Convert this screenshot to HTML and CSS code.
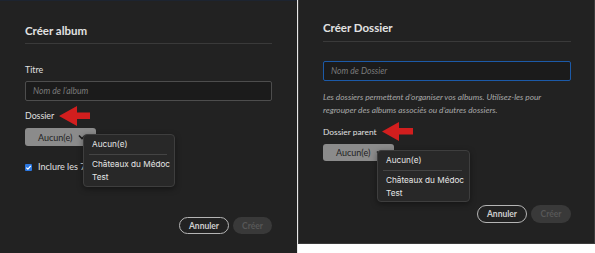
FILE: index.html
```html
<!DOCTYPE html>
<html lang="fr">
  <head>
    <meta charset="UTF-8" />
    <meta name="viewport" content="width=device-width, initial-scale=1.0" />
    <title>Créer album / Créer Dossier</title>
    <link rel="stylesheet" href="styles.css">
  </head>
  <body>
    <div class="screens">
      <div class="dialog album">
        <h2 class="heading">Créer album</h2>
        <label class="field_label" for="album_name">Titre</label>
        <input class="text_input" type="text" id="album_name" placeholder="Nom de l’album" />
        <div class="field_label with_arrow">
          Dossier
          <svg class="arrow" width="32" height="20" viewBox="0 0 32 20">
            <polygon points="0,10 18,0 18,6.5 31,6.5 31,13 18,13 18,20" fill="#d21e1e" />
          </svg>
        </div>
        <div class="select_wrap">
          <button class="select_btn">
            Aucun(e)
            <svg width="8" height="6" viewBox="0 0 8 6">
              <polyline points="1,1.5 4,4.5 7,1.5" fill="none" stroke="#1e1e1e" stroke-width="1.6" />
            </svg>
          </button>
          <div class="menu">
            <div class="menu_item">Aucun(e)</div>
            <div class="menu_sep"></div>
            <div class="menu_item">Châteaux du Médoc</div>
            <div class="menu_item">Test</div>
          </div>
        </div>
        <div class="check_row">
          <span class="check">
            <svg width="7" height="7" viewBox="0 0 7 7">
              <polyline points="1.3,3.6 2.9,5.2 5.8,1.8" fill="none" stroke="#fff" stroke-width="1.2" />
            </svg>
          </span>
          <span class="check_text">Inclure les 7</span>
        </div>
        <div class="actions">
          <button class="btn_outline">Annuler</button>
          <button class="btn_disabled">Créer</button>
        </div>
      </div>

      <div class="divider_line"></div>

      <div class="dialog folder">
        <h2 class="heading">Créer Dossier</h2>
        <input class="text_input focused" type="text" placeholder="Nom de Dossier" />
        <p class="help">
          Les dossiers permettent d’organiser vos albums. Utilisez-les pour<br />
          regrouper des albums associés ou d’autres dossiers.
        </p>
        <div class="field_label with_arrow">
          Dossier parent
          <svg class="arrow" width="32" height="19" viewBox="0 0 32 19">
            <polygon points="0,9.5 17,0 17,6 31,6 31,12.5 17,12.5 17,19" fill="#d21e1e" />
          </svg>
        </div>
        <div class="select_wrap">
          <button class="select_btn">
            Aucun(e)
            <svg width="8" height="6" viewBox="0 0 8 6">
              <polyline points="1,1.5 4,4.5 7,1.5" fill="none" stroke="#1e1e1e" stroke-width="1.6" />
            </svg>
          </button>
          <div class="menu">
            <div class="menu_item">Aucun(e)</div>
            <div class="menu_sep"></div>
            <div class="menu_item">Châteaux du Médoc</div>
            <div class="menu_item">Test</div>
          </div>
        </div>
        <div class="actions">
          <button class="btn_outline">Annuler</button>
          <button class="btn_disabled">Créer</button>
        </div>
      </div>
    </div>
  </body>
</html>
```

FILE: styles.css
```css
* {
  margin: 0;
  padding: 0;
  box-sizing: border-box;
}
body {
  background-color: #fff;
  font-family: Lato, "Open Sans", sans-serif;
  color: #ddd;
}

.screens {
  display: flex;
  align-items: flex-start;
  height: 253px;
}

.dialog {
  display: flex;
  flex-direction: column;
  align-items: flex-start;
  background-color: #222;
}

.album {
  width: 297px;
  height: 253px;
  padding: 22px 25px 0 25px;
  border-top: 1px solid #1d2430;
}

.divider_line {
  width: 1px;
  height: 253px;
  background-color: #e8e8e8;
}

.folder {
  width: 297px;
  height: 244px;
  padding: 20px 23px 0 24px;
  border: 1px solid #3b3b3b;
  border-top: none;
}

.heading {
  width: 100%;
  font-size: 11.5px;
  font-weight: 700;
  line-height: 16px;
  color: #e2e2e2;
  padding-bottom: 4px;
  border-bottom: 1px solid #3a3a3a;
}
.folder .heading {
  padding-bottom: 5px;
}

.field_label {
  font-size: 8.8px;
  line-height: 12px;
  color: #e0e0e0;
}
.album label.field_label {
  margin-top: 20px;
}

.with_arrow {
  position: relative;
}
.album .with_arrow {
  margin-top: 9px;
}
.folder .with_arrow {
  margin-top: 9px;
  font-size: 8.4px;
}
.arrow {
  position: absolute;
  left: calc(100% + 5px);
  top: -4px;
}

.text_input {
  width: 100%;
  height: 20px;
  margin-top: 5px;
  padding: 0 7px;
  background-color: #1b1b1b;
  border: 1px solid #4d4d4d;
  border-radius: 2px;
  font-family: Lato, sans-serif;
  font-size: 8.6px;
  color: #ccc;
}
.text_input::placeholder {
  color: #7a7a7a;
  font-style: italic;
}
.focused {
  margin-top: 19px;
  border: 1.5px solid #1c5aa8;
}

.help {
  margin-top: 10px;
  font-size: 8.3px;
  line-height: 13px;
  font-style: italic;
  color: #a8a8a8;
  white-space: nowrap;
}

.select_wrap {
  position: relative;
  margin-top: 6px;
}
.select_btn {
  display: flex;
  align-items: center;
  gap: 6px;
  width: 71px;
  height: 18px;
  padding-left: 13px;
  background-color: #8b8b8b;
  border: none;
  border-radius: 3px;
  font-family: Lato, sans-serif;
  font-size: 9px;
  color: #1e1e1e;
}
.select_btn svg {
  flex-shrink: 0;
}
.folder .select_btn {
  height: 17px;
}

.menu {
  position: absolute;
  left: 58px;
  top: 6px;
  width: 92px;
  height: 53px;
  padding: 3px 0 0 0;
  background-color: #282828;
  border: 1px solid #3e3e3e;
  border-radius: 4px;
  box-shadow: 0 2px 6px rgba(0, 0, 0, 0.4);
  z-index: 2;
}
.folder .menu {
  left: 54px;
  width: 93px;
  height: 52px;
}
.menu_item {
  padding-left: 8px;
  font-family: Inter, Roboto, sans-serif;
  font-size: 8.2px;
  line-height: 13px;
  color: #e6e6e6;
}
.menu_sep {
  height: 1px;
  margin: 3px 7px 3px 5px;
  background-color: #444;
}

.check_row {
  display: flex;
  align-items: center;
  gap: 6px;
  margin-top: 15px;
  font-size: 9px;
  line-height: 12px;
  color: #e0e0e0;
  white-space: nowrap;
}
.check {
  display: flex;
  align-items: center;
  justify-content: center;
  width: 7px;
  height: 7px;
  background-color: #2b77e0;
  border-radius: 1px;
}

.actions {
  display: flex;
  justify-content: flex-end;
  gap: 4px;
  width: 100%;
  margin-top: 44px;
}
.btn_outline,
.btn_disabled {
  height: 17px;
  border-radius: 9px;
  font-family: Lato, sans-serif;
  font-size: 8.5px;
  font-weight: 700;
}
.btn_outline {
  width: 50px;
  background-color: transparent;
  border: 1.5px solid #b5b5b5;
  color: #cfcfcf;
}
.btn_disabled {
  width: 39px;
  background-color: #393939;
  border: none;
  color: #575757;
}
.folder .btn_outline,
.folder .btn_disabled {
  height: 18px;
}
.folder .btn_disabled {
  width: 40px;
}
```
